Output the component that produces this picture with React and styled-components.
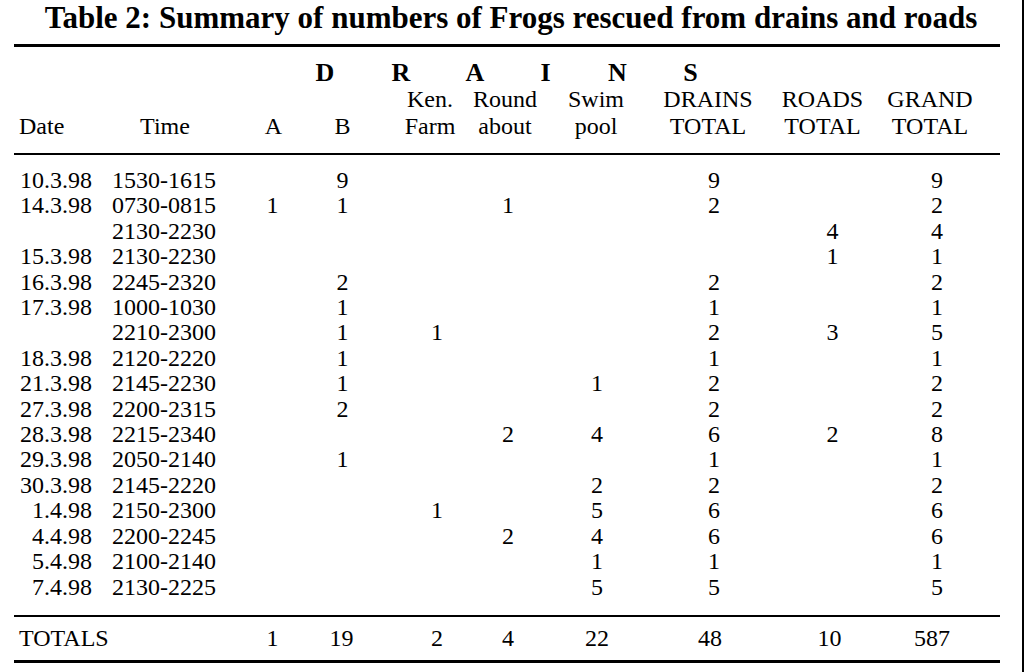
import React from 'react';
import styled, {createGlobalStyle} from 'styled-components';

const Global = createGlobalStyle`
body {
  margin: 0;
  background: #fff;
  font-family: "Liberation Serif", "Times New Roman", serif;
  color: #000;
}
`

const Page = styled.div`
width: 1024px;
height: 672px;
box-sizing: border-box;
border-right: 2px solid #000;
overflow: hidden;
`

const Title = styled.h1`
margin: 0;
height: 36px;
line-height: 36px;
font-size: 31px;
font-weight: bold;
text-align: center;
`

const Table = styled.div`
margin: 8px 0 0 14px;
width: 986px;
`

const Rule = styled.div`
height: ${p => p.$h}px;
background: #000;
`

const Grid = styled.div`
display: grid;
grid-template-columns: 86px 140px 67px 81px 82px 82px 102px 116px 111px 106px;
line-height: ${p => p.$lh}px;
font-size: 24px;
padding: ${p => p.$pad};
`

// horizontal nudge of a cell's content, in px
const shift = ({$dx = 0}) => `
padding-left: ${Math.max(0, 2 * $dx)}px;
padding-right: ${Math.max(0, -2 * $dx)}px;
`

const Cell = styled.div`
text-align: ${p => p.$align || 'center'};
white-space: nowrap;
${shift}
${p => p.$span ? `grid-column: span ${p.$span};` : ''}
${p => p.$pl ? `padding-left: ${p.$pl}px;` : ''}
${p => p.$pr ? `padding-right: ${p.$pr}px;` : ''}
`

const Spaced = styled.div`
grid-column: 3 / 9;
display: flex;
padding-left: 48px;
font-weight: bold;
font-size: 26px;
`

const Letter = styled.span`
width: ${p => p.$w}px;
text-align: center;
`

// header shift, data shift for columns A..GRAND
const HD = [0, -5, 1, -6, -7, -4, -3, -4];
const DD = [-1, -5, 8, -3, -6, 2, 7, 3];

const rows = [
  ['10.3.98', '1530-1615', '', '9', '', '', '', '9', '', '9'],
  ['14.3.98', '0730-0815', '1', '1', '', '1', '', '2', '', '2'],
  ['', '2130-2230', '', '', '', '', '', '', '4', '4'],
  ['15.3.98', '2130-2230', '', '', '', '', '', '', '1', '1'],
  ['16.3.98', '2245-2320', '', '2', '', '', '', '2', '', '2'],
  ['17.3.98', '1000-1030', '', '1', '', '', '', '1', '', '1'],
  ['', '2210-2300', '', '1', '1', '', '', '2', '3', '5'],
  ['18.3.98', '2120-2220', '', '1', '', '', '', '1', '', '1'],
  ['21.3.98', '2145-2230', '', '1', '', '', '1', '2', '', '2'],
  ['27.3.98', '2200-2315', '', '2', '', '', '', '2', '', '2'],
  ['28.3.98', '2215-2340', '', '', '', '2', '4', '6', '2', '8'],
  ['29.3.98', '2050-2140', '', '1', '', '', '', '1', '', '1'],
  ['30.3.98', '2145-2220', '', '', '', '', '2', '2', '', '2'],
  ['1.4.98', '2150-2300', '', '', '1', '', '5', '6', '', '6'],
  ['4.4.98', '2200-2245', '', '', '', '2', '4', '6', '', '6'],
  ['5.4.98', '2100-2140', '', '', '', '', '1', '1', '', '1'],
  ['7.4.98', '2130-2225', '', '', '', '', '5', '5', '', '5'],
];

const totals = ['1', '19', '2', '4', '22', '48', '10', '587'];
const TD = [-1, -6, 8, -3, -6, -2, 4, -2];

const letters = [['D', 74], ['R', 78], ['A', 70], ['I', 71], ['N', 73], ['S', 73]];

export default function App() {
  return (
    <Page>
      <Global/>
      <Title>Table 2: Summary of numbers of Frogs rescued from drains and roads</Title>
      <Table>
        <Rule $h={3}/>
        <Grid $lh={27} $pad="12px 0 13px">
          <Spaced>
            {letters.map(([l, w]) => <Letter key={l} $w={w}>{l}</Letter>)}
          </Spaced>
          <Cell $span={4}/>
          {['Ken.', 'Round', 'Swim', 'DRAINS', 'ROADS', 'GRAND'].map((t, i) =>
            <Cell key={t} $dx={HD[i + 2]}>{t}</Cell>)}
          <Cell $align="left" $pl={5}>Date</Cell>
          <Cell $dx={-5}>Time</Cell>
          {['A', 'B', 'Farm', 'about', 'pool', 'TOTAL', 'TOTAL', 'TOTAL'].map((t, i) =>
            <Cell key={i} $dx={HD[i]}>{t}</Cell>)}
        </Grid>
        <Rule $h={2}/>
        <Grid $lh={25.4} $pad="13px 0 15px">
          {rows.map((r, ri) => (
            <React.Fragment key={ri}>
              <Cell $align="right" $pr={8}>{r[0]}</Cell>
              <Cell $align="left" $pl={12}>{r[1]}</Cell>
              {r.slice(2).map((v, i) => <Cell key={i} $dx={DD[i]}>{v}</Cell>)}
            </React.Fragment>
          ))}
        </Grid>
        <Rule $h={2}/>
        <Grid $lh={25} $pad="9px 0 9px">
          <Cell $span={2} $align="left" $pl={5}>TOTALS</Cell>
          {totals.map((v, i) => <Cell key={i} $dx={TD[i]}>{v}</Cell>)}
        </Grid>
        <Rule $h={3}/>
      </Table>
    </Page>
  );
}
